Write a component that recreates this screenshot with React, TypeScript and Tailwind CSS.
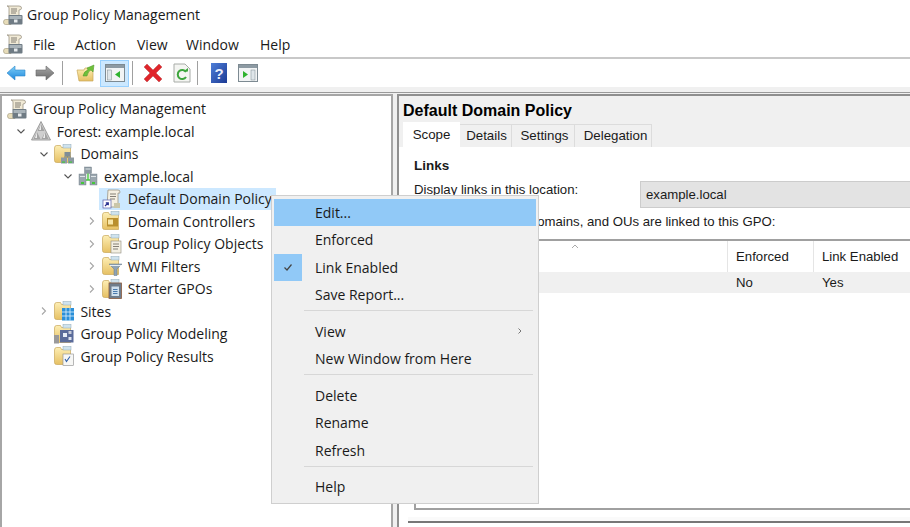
import React from "react";

const SANS = "font-['Open_Sans','Noto_Sans',sans-serif]";

function Defs() {
  return (
    <svg className="absolute h-0 w-0">
      <defs>
        <linearGradient id="fold" x1="0" y1="0" x2="0" y2="1">
          <stop offset="0" stopColor="#fdeeb4" />
          <stop offset="1" stopColor="#e6c063" />
        </linearGradient>
        <linearGradient id="blue" x1="0" y1="0" x2="0" y2="1">
          <stop offset="0" stopColor="#7fd0f8" />
          <stop offset="1" stopColor="#1c86dc" />
        </linearGradient>
        <linearGradient id="gray" x1="0" y1="0" x2="0" y2="1">
          <stop offset="0" stopColor="#a8a8a8" />
          <stop offset="1" stopColor="#6a6a6a" />
        </linearGradient>
        <linearGradient id="help" x1="0" y1="0" x2="1" y2="1">
          <stop offset="0" stopColor="#4f7fd8" />
          <stop offset="1" stopColor="#1c3a94" />
        </linearGradient>
      </defs>
    </svg>
  );
}

function ScrollIcon() {
  return (
    <svg viewBox="0 0 20 20" className="h-5 w-5 shrink-0">
      <path d="M4 1h12q2.500 0 2.500 2T16 5v6H6V3q0-2-2-2z" fill="#f1ead6" stroke="#9c9484" strokeWidth=".8" />
      <path d="M8 4h6M8 6h6M8 8h5" stroke="#77726a" strokeWidth=".9" />
      <path d="M.5 17q0-2.500 2-2.500H8V19.500H2.500q-2 0-2-2.500z" fill="#e7dcb9" stroke="#a79f84" strokeWidth=".7" />
      <rect x="5.500" y="10" width="14" height="9.500" rx="1" fill="#6f7b84" />
      <rect x="6.500" y="11" width="12" height="3" fill="#aab4ba" />
      <rect x="11" y="14.500" width="3.500" height="3" fill="#e6eaec" />
    </svg>
  );
}

function FolderBase({ children }: { children?: React.ReactNode }) {
  return (
    <svg viewBox="0 0 20 20" className="h-5 w-5 shrink-0">
      <path d="M.5 4q0-2.500 2-2.500h4l1 2h9v15h-14q-2 0-2-2z" fill="url(#fold)" stroke="#c9a85a" strokeWidth=".7" />
      <rect x="9" y=".5" width="8" height="3.500" fill="#cfe3ee" stroke="#8fa9b8" strokeWidth=".5" />
      {children}
    </svg>
  );
}

function ServerGlyph({ x, y }: { x: number; y: number }) {
  return (
    <g transform={`translate(${x} ${y})`}>
      <rect x="3.500" y="0" width="6" height="4.500" fill="#7f8d97" />
      <rect x="0" y="5.500" width="6" height="6" fill="#8d9aa3" />
      <rect x="7" y="5.500" width="6" height="6" fill="#8d9aa3" />
      <rect x="1" y="9.500" width="3" height="1.200" fill="#44c63c" />
      <rect x="8" y="9.500" width="3" height="1.200" fill="#44c63c" />
      <path d="M6.500 4.500v1M3 5h7" stroke="#5c6870" strokeWidth=".6" />
    </g>
  );
}

function DomainIcon() {
  return (
    <svg viewBox="0 0 20 20" className="h-5 w-5 shrink-0">
      <rect x="6.500" y="1" width="7" height="6.500" fill="#8d9aa3" stroke="#6d7a83" strokeWidth=".4" />
      <rect x="7.500" y="2.500" width="5" height="1" fill="#dfe5e8" />
      <rect x="1" y="8" width="7" height="11" fill="#9aa6ae" stroke="#6d7a83" strokeWidth=".4" />
      <rect x="12" y="8" width="7" height="11" fill="#9aa6ae" stroke="#6d7a83" strokeWidth=".4" />
      <rect x="2" y="10" width="5" height="1" fill="#dfe5e8" />
      <rect x="13" y="10" width="5" height="1" fill="#dfe5e8" />
      <path d="M8 14h4M10 7.500v6.500" stroke="#44c63c" strokeWidth="1.400" />
      <rect x="3" y="16" width="3" height="2" fill="#44c63c" />
      <rect x="14" y="16" width="3" height="2" fill="#44c63c" />
    </svg>
  );
}

function ForestIcon() {
  return (
    <svg viewBox="0 0 20 20" className="h-5 w-5 shrink-0">
      <path d="M10 .5l9.500 18.500H.5z" fill="#cfcfcf" stroke="#8c8c8c" strokeWidth=".8" />
      <path d="M10 3L6.500 10h7zM6 11l-3.500 7h7zM14 11l-3.500 7h7z" fill="#a3a3a3" />
      <path d="M10 3L8 9h2zM6 11l-2 6h2zM14 11l-2 6h2z" fill="#ececec" />
    </svg>
  );
}

function GpoIcon() {
  return (
    <svg viewBox="0 0 20 20" className="h-5 w-5 shrink-0">
      <path d="M6 1h10q2 0 2 2t-2 1v12q0 2-2 2H5z" fill="#f5f0e2" stroke="#9c9484" strokeWidth=".8" />
      <path d="M8 5h6M8 7.500h6M8 10h5" stroke="#77726a" strokeWidth=".9" />
      <rect x="1" y="11" width="8" height="8" fill="#fff" stroke="#5a5fa8" strokeWidth=".7" />
      <path d="M3 17l3-3M3.800 13.800H6.300V16.300" fill="none" stroke="#27308f" strokeWidth="1.200" />
      <rect x="12" y="14" width="6" height="5" fill="#c9c6a9" />
    </svg>
  );
}

function Chevron({ open }: { open?: boolean }) {
  return (
    <svg viewBox="0 0 10 10" className="h-2.5 w-2.5 shrink-0">
      <path d={open ? "M1.500 3.500L5 7l3.500-3.500" : "M3 1.500L6.500 5 3 8.500"} fill="none" stroke={open ? "#555" : "#a6a6a6"} strokeWidth="1.100" />
    </svg>
  );
}

type Row = { label: string; level: number; chev?: "open" | "closed"; icon: React.ReactNode; selected?: boolean };

const rows: Row[] = [
  { label: "Group Policy Management", level: 0, icon: <ScrollIcon /> },
  { label: "Forest: example.local", level: 1, chev: "open", icon: <ForestIcon /> },
  { label: "Domains", level: 2, chev: "open", icon: <FolderBase><ServerGlyph x={7} y={8} /></FolderBase> },
  { label: "example.local", level: 3, chev: "open", icon: <DomainIcon /> },
  { label: "Default Domain Policy", level: 4, icon: <GpoIcon />, selected: true },
  {
    label: "Domain Controllers",
    level: 4,
    chev: "closed",
    icon: <FolderBase><rect x="5" y="7" width="11" height="8.500" fill="#b98f2e" /><rect x="6" y="8.500" width="5" height="5" fill="#f7e6a8" /></FolderBase>,
  },
  {
    label: "Group Policy Objects",
    level: 4,
    chev: "closed",
    icon: <FolderBase><rect x="9" y="7" width="10" height="12" fill="#f3efe2" stroke="#8d897d" strokeWidth=".6" /><path d="M11 10h6M11 12.500h6M11 15h5" stroke="#77726a" strokeWidth=".9" /></FolderBase>,
  },
  {
    label: "WMI Filters",
    level: 4,
    chev: "closed",
    icon: <FolderBase><path d="M7 8h13l-5 5v6.500h-3V13z" fill="#8fa3b4" stroke="#66798a" strokeWidth=".5" /><path d="M8 9.500h11" stroke="#e6edf2" /></FolderBase>,
  },
  {
    label: "Starter GPOs",
    level: 4,
    chev: "closed",
    icon: <FolderBase><rect x="7" y="4" width="12.500" height="15.500" fill="#6f7d8c" stroke="#8b5a3c" strokeWidth=".8" /><rect x="9.500" y="7.500" width="7.500" height="9.500" fill="#cfe0ee" /><path d="M11 10.500h4.500M11 12.500h4.500M11 14.500h4.500" stroke="#3b6ea5" strokeWidth=".9" /></FolderBase>,
  },
  {
    label: "Sites",
    level: 2,
    chev: "closed",
    icon: <FolderBase><rect x="8" y="7" width="12" height="12.500" fill="#2a8fd8" /><path d="M8 11h12M8 15h12M12 7v12.500M16 7v12.500" stroke="#dff1fc" strokeWidth=".8" /></FolderBase>,
  },
  {
    label: "Group Policy Modeling",
    level: 2,
    icon: <FolderBase><rect x="0" y="11" width="5" height="8.500" fill="#9a9a9a" /><rect x="6" y="6" width="13.500" height="12.500" fill="#5a6b9a" /><rect x="9" y="9" width="4" height="4" fill="#e6edf7" /><rect x="14.500" y="7" width="3" height="3" fill="#c7ccd9" /><rect x="14.500" y="13" width="3" height="3" fill="#dfe5f0" /></FolderBase>,
  },
  {
    label: "Group Policy Results",
    level: 2,
    icon: <FolderBase><rect x="9" y="8" width="10.500" height="11.500" fill="#f7f7f5" stroke="#8a8a8a" strokeWidth=".6" /><path d="M11 13l1.500 2.500 3.500-5" fill="none" stroke="#2f5fa8" strokeWidth="1.100" /></FolderBase>,
  },
];

function TreeRow({ row }: { row: Row }) {
  return (
    <div className="flex h-[22.5px] items-center whitespace-nowrap">
      <div style={{ width: row.level * 23.7 }} className="flex shrink-0 justify-end">
        {row.chev && <div className="mr-[5px]"><Chevron open={row.chev === "open"} /></div>}
      </div>
      <div className={`flex h-[22.5px] items-center ${row.selected ? "-ml-[3px] w-[177px] bg-[#cce8ff] pl-[3px]" : ""}`}>
        {row.icon}
        <span className="ml-[6px]">{row.label}</span>
      </div>
    </div>
  );
}

function ToolBtn({ children, active }: { children: React.ReactNode; active?: boolean }) {
  return (
    <div className={`flex h-[27px] w-[29px] items-center justify-center border ${active ? "border-[#99d1ff] bg-[#cce8ff]" : "border-transparent"}`}>
      {children}
    </div>
  );
}

function Sep() {
  return <div className="mx-[3px] h-[24px] w-px bg-[#a0a0a0]" />;
}

function MenuRow({ label, hot, check, arrow }: { label: string; hot?: boolean; check?: boolean; arrow?: boolean }) {
  return (
    <div className={`relative flex h-[27.5px] items-center pl-[41px] ${hot ? "bg-[#91c9f7]" : ""}`}>
      {check && (
        <div className="absolute left-0 top-0 flex h-[27.5px] w-[28px] items-center justify-center bg-[#91c9f7]">
          <svg viewBox="0 0 10 10" className="h-2.5 w-2.5">
            <path d="M1.500 5.500L4 8l4.500-5.500" fill="none" stroke="#444" strokeWidth="1.200" />
          </svg>
        </div>
      )}
      <span>{label}</span>
      {arrow && (
        <svg viewBox="0 0 8 8" className="absolute right-[12px] top-[9px] h-2 w-2">
          <path d="M2.500 1.500L5 4 2.500 6.500" fill="none" stroke="#777" strokeWidth="1" />
        </svg>
      )}
    </div>
  );
}

function MenuSep() {
  return <div className="mb-[6.5px] ml-[30px] mr-[3px] mt-[1.5px] h-px bg-[#d7d7d7]" />;
}

function TableHead({ label, width }: { label: string; width: string }) {
  return <div className={`flex items-center border-l border-[#e5e5e5] pl-[8px] pt-[1px] ${width}`}>{label}</div>;
}

export default function App() {
  return (
    <div className={`relative flex h-[527px] w-[910px] flex-col overflow-hidden bg-white text-[14px] text-[#1a1a1a] ${SANS}`}>
      <Defs />
      <div className="flex h-[29px] shrink-0 items-center pl-[3px]">
        <ScrollIcon />
        <span className="ml-[4px]">Group Policy Management</span>
      </div>

      <div className="flex h-[28px] shrink-0 items-center pl-[3px] pt-[2px]">
        <ScrollIcon />
        <div className="ml-[10px] w-[42px]">File</div>
        <div className="w-[62px]">Action</div>
        <div className="w-[49px]">View</div>
        <div className="w-[74px]">Window</div>
        <div>Help</div>
      </div>

      <div className="flex h-[30px] shrink-0 items-center border-t-2 border-[#c8c8c8] pl-[1px]">
        <ToolBtn>
          <svg viewBox="0 0 20 16" className="h-4 w-5">
            <path d="M1 8l8-7v4h10v6H9v4z" fill="url(#blue)" stroke="#2d86c9" strokeWidth=".6" />
          </svg>
        </ToolBtn>
        <ToolBtn>
          <svg viewBox="0 0 20 16" className="h-4 w-5">
            <path d="M19 8l-8-7v4H1v6h10v4z" fill="url(#gray)" stroke="#6a6a6a" strokeWidth=".6" />
          </svg>
        </ToolBtn>
        <Sep />
        <div className="ml-[5px]" />
        <ToolBtn>
          <svg viewBox="0 0 20 20" className="h-5 w-5">
            <path d="M1 7h7l1-2h8v13H3z" fill="url(#fold)" stroke="#c9a85a" strokeWidth=".7" />
            <path d="M7 13q1-5 5-6l-1-2 7-3-1 7-2-2q-3 1-4 6z" fill="#6fc03a" stroke="#4b9428" strokeWidth=".5" />
          </svg>
        </ToolBtn>
        <ToolBtn active>
          <svg viewBox="0 0 20 18" className="h-[18px] w-5">
            <rect x=".5" y=".5" width="19" height="17" fill="#f2f4f5" stroke="#7d8a92" />
            <rect x="1" y="1" width="18" height="3" fill="#8d9aa3" />
            <rect x="2.500" y="6" width="4" height="10" fill="#dfe6ea" stroke="#7d8a92" strokeWidth=".5" />
            <path d="M15 7v7l-5-3.500z" fill="#2fb32f" />
          </svg>
        </ToolBtn>
        <Sep />
        <div className="ml-[7px]" />
        <svg viewBox="0 0 20 20" className="h-5 w-5">
          <path d="M4 1l6 6 6-6 3 3-6 6 6 6-3 3-6-6-6 6-3-3 6-6-6-6z" fill="#e0252b" stroke="#b8484b" strokeWidth=".5" />
        </svg>
        <div className="ml-[10px]" />
        <svg viewBox="0 0 18 20" className="h-5 w-[18px]">
          <path d="M1 1h11l5 5v13H1z" fill="#f4f5f2" stroke="#a8aca8" />
          <path d="M13 9a4.500 4.500 0 1 0 0 5" fill="none" stroke="#3da53d" strokeWidth="2" />
          <path d="M10.500 8.500h4.500v-3.500z" fill="#3da53d" />
        </svg>
        <div className="ml-[3px]" />
        <Sep />
        <div className="ml-[10px]" />
        <svg viewBox="0 0 16 20" className="h-5 w-4">
          <rect width="16" height="20" fill="url(#help)" />
          <text x="8" y="15.500" textAnchor="middle" fontSize="15" fontWeight="700" fill="#e8eefc" fontFamily="Liberation Sans">?</text>
        </svg>
        <div className="ml-[11px]" />
        <svg viewBox="0 0 20 18" className="h-[18px] w-5">
          <rect x=".5" y=".5" width="19" height="17" fill="#f2f4f5" stroke="#7d8a92" />
          <rect x="1" y="1" width="18" height="3" fill="#8d9aa3" />
          <rect x="13" y="6" width="4" height="10" fill="#dfe6ea" stroke="#7d8a92" strokeWidth=".5" />
          <path d="M5 7v7l5-3.500z" fill="#2fb32f" />
        </svg>
      </div>

      <div className="h-[6px] shrink-0 border-b border-[#9a9a9a] bg-[#f0f0f0]" />

      <div className="flex min-h-0 flex-1 bg-[#f0f0f0] pt-[1px]">
        <div className="h-full w-[393px] shrink-0 border-x-2 border-t-2 border-[#a6a6a6] bg-white pl-[5px] pt-[1.5px]">
          {rows.map((r) => (
            <TreeRow key={r.label} row={r} />
          ))}
        </div>
        <div className="w-[4px] shrink-0" />
        <div className="flex min-w-0 flex-1 flex-col border-l-2 border-t-2 border-[#8f8f8f] font-['Liberation_Sans',sans-serif]">
          <div className="flex h-[26px] shrink-0 items-center pl-[4px] pt-[3px] text-[16px] font-bold text-black">Default Domain Policy</div>
          <div className="flex h-[25px] shrink-0 items-end pl-[4px] text-[13.3px]">
            <div className="flex h-[25px] w-[57px] items-center justify-center bg-white">Scope</div>
            <div className="flex h-[23px] w-[52px] items-center justify-center border border-b-0 border-l-0 border-[#dcdcdc] pl-[2px]">Details</div>
            <div className="flex h-[23px] w-[63px] items-center justify-center border border-b-0 border-l-0 border-[#dcdcdc] pl-[3px]">Settings</div>
            <div className="flex h-[23px] w-[77px] items-center justify-center border border-b-0 border-l-0 border-[#dcdcdc] pl-[5px]">Delegation</div>
          </div>
          <div className="flex min-h-0 flex-1 flex-col bg-white pl-[15px] text-[13.2px]">
            <div className="mt-[10px] h-[17px] text-[13.5px] font-bold leading-[17px]">Links</div>
            <div className="mt-[7px] flex h-[27px] items-center">
              <span className="w-[226px] -translate-y-[5px]">Display links in this location:</span>
              <div className="flex h-[27px] flex-1 items-center border border-r-0 border-[#cccccc] bg-[#e3e3e3] pl-[5px]">example.local</div>
            </div>
            <div className="mt-[5px] h-[17px] leading-[17px]">The following sites, domains, and OUs are linked to this GPO:</div>
            <div className="relative mt-[9px] h-[271px] border-b-2 border-l-2 border-t-2 border-[#a0a0a0]">
              <div className="flex h-[31px] justify-end">
                <TableHead label="Enforced" width="w-[86px]" />
                <TableHead label="Link Enabled" width="w-[97px]" />
              </div>
              <div className="flex h-[21px] justify-end bg-[#f0f0f0]">
                <div className="w-[86px] pl-[9px] leading-[21px]">No</div>
                <div className="w-[97px] pl-[9px] leading-[21px]">Yes</div>
              </div>
              <svg viewBox="0 0 8 5" className="absolute left-[155px] top-[3px] h-[5px] w-2">
                <path d="M1 4l3-3 3 3" fill="none" stroke="#aaa" />
              </svg>
            </div>
            <div className="-ml-[6px] mt-[7px] h-[6px] border-b-2 border-[#777] bg-[#fafafa]" />
          </div>
        </div>
      </div>

      <div className={`absolute left-[271px] top-[195px] w-[268px] border border-[#cfcfcf] bg-[#f0f0f0] py-[2.5px] px-[2px] text-[14px] ${SANS}`}>
        <MenuRow label="Edit..." hot />
        <MenuRow label="Enforced" />
        <MenuRow label="Link Enabled" check />
        <MenuRow label="Save Report..." />
        <MenuSep />
        <MenuRow label="View" arrow />
        <MenuRow label="New Window from Here" />
        <MenuSep />
        <MenuRow label="Delete" />
        <MenuRow label="Rename" />
        <MenuRow label="Refresh" />
        <MenuSep />
        <MenuRow label="Help" />
      </div>
    </div>
  );
}
